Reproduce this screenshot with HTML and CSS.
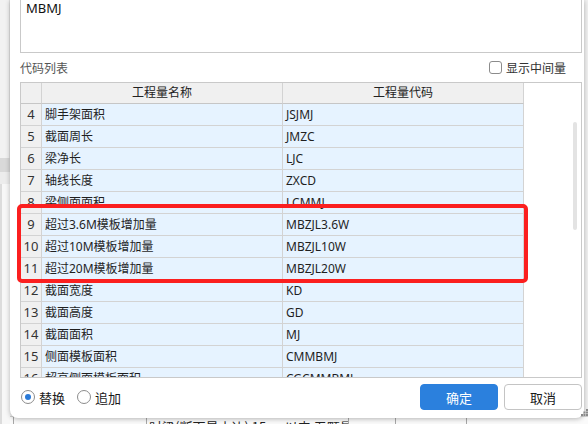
FILE: index.html
```html
<!DOCTYPE html>
<html lang="zh-CN">
<head>
<meta charset="utf-8">
<title>代码列表</title>
<link rel="stylesheet" href="styles.css">
</head>
<body>
<div class="app">
  <div class="side">
    <div class="side-top"></div>
    <div class="side-band"></div>
    <div class="side-gap"></div>
    <div class="side-panel"></div>
  </div>
  <div class="app-bottom">
    <div class="ab-cell w1"></div>
    <div class="ab-cell w2"><span>时梁(断面最小边) 15cm以内 五颗量</span></div>
    <div class="ab-cell w3"></div>
    <div class="ab-cell w4"></div>
    <div class="ab-cell w5"></div>
  </div>
</div>

<div class="dialog">
  <div class="textarea">MBMJ</div>
  <div class="list-head">
    <span class="label">代码列表</span>
    <label class="check"><span class="box"></span><span>显示中间量</span></label>
  </div>
  <div class="grid-wrap">
    <div class="grid">
      <div class="row head"><div class="c num"></div><div class="c name">工程量名称</div><div class="c code">工程量代码</div></div>
      <div class="row"><div class="c num">4</div><div class="c name">脚手架面积</div><div class="c code">JSJMJ</div></div>
      <div class="row"><div class="c num">5</div><div class="c name">截面周长</div><div class="c code">JMZC</div></div>
      <div class="row"><div class="c num">6</div><div class="c name">梁净长</div><div class="c code">LJC</div></div>
      <div class="row"><div class="c num">7</div><div class="c name">轴线长度</div><div class="c code">ZXCD</div></div>
      <div class="row"><div class="c num">8</div><div class="c name">梁侧面面积</div><div class="c code">LCMMJ</div></div>
      <div class="row"><div class="c num">9</div><div class="c name">超过3.6M模板增加量</div><div class="c code">MBZJL3.6W</div></div>
      <div class="row"><div class="c num">10</div><div class="c name">超过10M模板增加量</div><div class="c code">MBZJL10W</div></div>
      <div class="row"><div class="c num">11</div><div class="c name">超过20M模板增加量</div><div class="c code">MBZJL20W</div></div>
      <div class="row"><div class="c num">12</div><div class="c name">截面宽度</div><div class="c code">KD</div></div>
      <div class="row"><div class="c num">13</div><div class="c name">截面高度</div><div class="c code">GD</div></div>
      <div class="row"><div class="c num">14</div><div class="c name">截面面积</div><div class="c code">MJ</div></div>
      <div class="row"><div class="c num">15</div><div class="c name">侧面模板面积</div><div class="c code">CMMBMJ</div></div>
      <div class="row"><div class="c num">16</div><div class="c name">超高侧面模板面积</div><div class="c code">CGCMMBMJ</div></div>
    </div>
    <div class="thumb"></div>
  </div>
  <div class="footer">
    <div class="radios">
      <label class="radio"><span class="dot on"></span><span>替换</span></label>
      <label class="radio"><span class="dot"></span><span>追加</span></label>
    </div>
    <div class="buttons">
      <button class="btn primary">确定</button>
      <button class="btn">取消</button>
    </div>
  </div>
  <div class="grip">
    <svg width="7" height="7" viewBox="0 0 7 7"><g fill="#8a8a8a"><rect x="5" y="0" width="2" height="2"/><rect x="2.5" y="2.5" width="2" height="2"/><rect x="5" y="2.5" width="2" height="2"/><rect x="0" y="5" width="2" height="2"/><rect x="2.5" y="5" width="2" height="2"/><rect x="5" y="5" width="2" height="2"/></g></svg>
  </div>
</div>

<div class="highlight"></div>
</body>
</html>
```

FILE: styles.css
```css
html, body {
  margin: 0;
  padding: 0;
}
body {
  width: 588px;
  height: 424px;
  overflow: hidden;
  position: relative;
  background: #f0f0f0;
  font-family: "Noto Sans", "Noto Sans CJK SC", sans-serif;
  font-size: 12px;
  color: #1f1f1f;
}

/* background application */
.app {
  position: absolute;
  inset: 0;
}
.side {
  position: absolute;
  left: 0;
  top: 0;
  width: 10px;
  height: 424px;
  display: flex;
  flex-direction: column;
}
.side-top {
  height: 158px;
  background: #f2f2f2;
  border-right: 1px solid #e2e2e2;
}
.side-band {
  height: 14px;
  background: #d9d9d9;
}
.side-gap {
  height: 12px;
  background: #ececec;
}
.side-panel {
  flex: 1;
  background: #f7f7f7;
  border-left: 2px solid #dcdcdc;
}
.app-bottom {
  position: absolute;
  left: 10px;
  right: 0;
  top: 416px;
  height: 20px;
  display: flex;
  background: #fafafa;
  border-top: 1px solid #d0d0d0;
}
.ab-cell {
  border-left: 1px solid #a8a8a8;
  height: 20px;
  overflow: hidden;
  white-space: nowrap;
}
.ab-cell span {
  display: block;
  padding: 1px 0 0 2px;
  font-family: "Noto Sans CJK SC", sans-serif;
  font-size: 13px;
  line-height: 18px;
  color: #222;
}
.w1 { width: 132px; margin-left: 3px; }
.w2 { width: 201px; }
.w3 { width: 46px; }
.w4 { width: 70px; }
.w5 { flex: 1; }

/* dialog window */
.dialog {
  position: absolute;
  left: 10px;
  top: 0;
  width: 574px;
  height: 418px;
  box-sizing: border-box;
  padding: 0 2px 0 10px;
  background: #ffffff;
  border-radius: 0 0 8px 8px;
  box-shadow: 0 1px 5px rgba(0, 0, 0, 0.28);
  display: flex;
  flex-direction: column;
}
.textarea {
  margin-top: -1px;
  height: 54px;
  box-sizing: border-box;
  border: 1px solid #c9c9c9;
  padding: 0 5px;
  font-size: 13px;
  line-height: 16px;
  color: #111;
}
.list-head {
  height: 29px;
  display: flex;
  align-items: center;
  justify-content: space-between;
  padding-right: 16px;
}
.label {
  color: #555;
  font-family: "Noto Sans CJK SC", sans-serif;
  font-size: 12px;
}
.check {
  display: flex;
  align-items: center;
  gap: 4px;
  color: #333;
  font-family: "Noto Sans CJK SC", sans-serif;
}
.box {
  width: 13px;
  height: 13px;
  box-sizing: border-box;
  border: 1px solid #8c8c8c;
  border-radius: 3px;
  background: #fff;
}

.grid-wrap {
  position: relative;
  height: 296px;
  box-sizing: border-box;
  border: 1px solid #c9c9c9;
  overflow: hidden;
}
.grid {
  display: flex;
  flex-direction: column;
}
.row {
  display: grid;
  grid-template-columns: 21px 241px 241px;
  height: 22px;
}
.c {
  box-sizing: border-box;
  border-right: 1px solid #d3d3d3;
  border-bottom: 1px solid #d3d3d3;
  background: #e6f3ff;
  line-height: 21px;
  padding-left: 3px;
  white-space: nowrap;
  overflow: hidden;
}
.c.name {
  font-family: "Noto Sans", "Noto Sans CJK SC", sans-serif;
}
.c.num {
  background: #f0f0f0;
  padding: 0;
  text-align: center;
  font-size: 13px;
  color: #333;
}
.row.head {
  height: 21px;
}
.row.head .c {
  background: #f0f0f0;
  border-bottom-color: #c6c6c6;
  line-height: 20px;
  text-align: center;
  padding: 0;
  color: #222;
}
.thumb {
  position: absolute;
  left: 552px;
  top: 39px;
  width: 4px;
  height: 108px;
  border-radius: 2px;
  background: #e3e3e3;
}

.footer {
  display: flex;
  justify-content: space-between;
  align-items: center;
  padding-top: 6px;
}
.radios {
  display: flex;
  align-items: center;
  gap: 12px;
  margin-left: 1px;
  font-family: "Noto Sans CJK SC", sans-serif;
  font-size: 13px;
}
.radio {
  display: flex;
  align-items: center;
  gap: 4px;
  color: #1a1a1a;
}
.dot {
  width: 14px;
  height: 14px;
  box-sizing: border-box;
  border: 1px solid #8c8c8c;
  border-radius: 50%;
  background: #fff;
  display: flex;
  align-items: center;
  justify-content: center;
}
.dot.on::after {
  content: "";
  width: 6px;
  height: 6px;
  border-radius: 50%;
  background: #2a7ad8;
}
.buttons {
  display: flex;
  gap: 6px;
}
.btn {
  width: 78px;
  height: 26px;
  box-sizing: border-box;
  border: 1px solid #c4c4c4;
  border-radius: 4px;
  background: #fff;
  color: #1a1a1a;
  font-family: "Noto Sans CJK SC", sans-serif;
  font-size: 13px;
  padding: 0;
}
.btn.primary {
  background: #2b80dd;
  border-color: #2b80dd;
  color: #fff;
}
.grip {
  position: absolute;
  right: -4px;
  bottom: 2px;
  width: 7px;
  height: 7px;
  line-height: 0;
}

.highlight {
  position: absolute;
  left: 17px;
  top: 204px;
  width: 511px;
  height: 79px;
  box-sizing: border-box;
  border: 4px solid #fb1f1f;
  border-radius: 5px;
}
```
